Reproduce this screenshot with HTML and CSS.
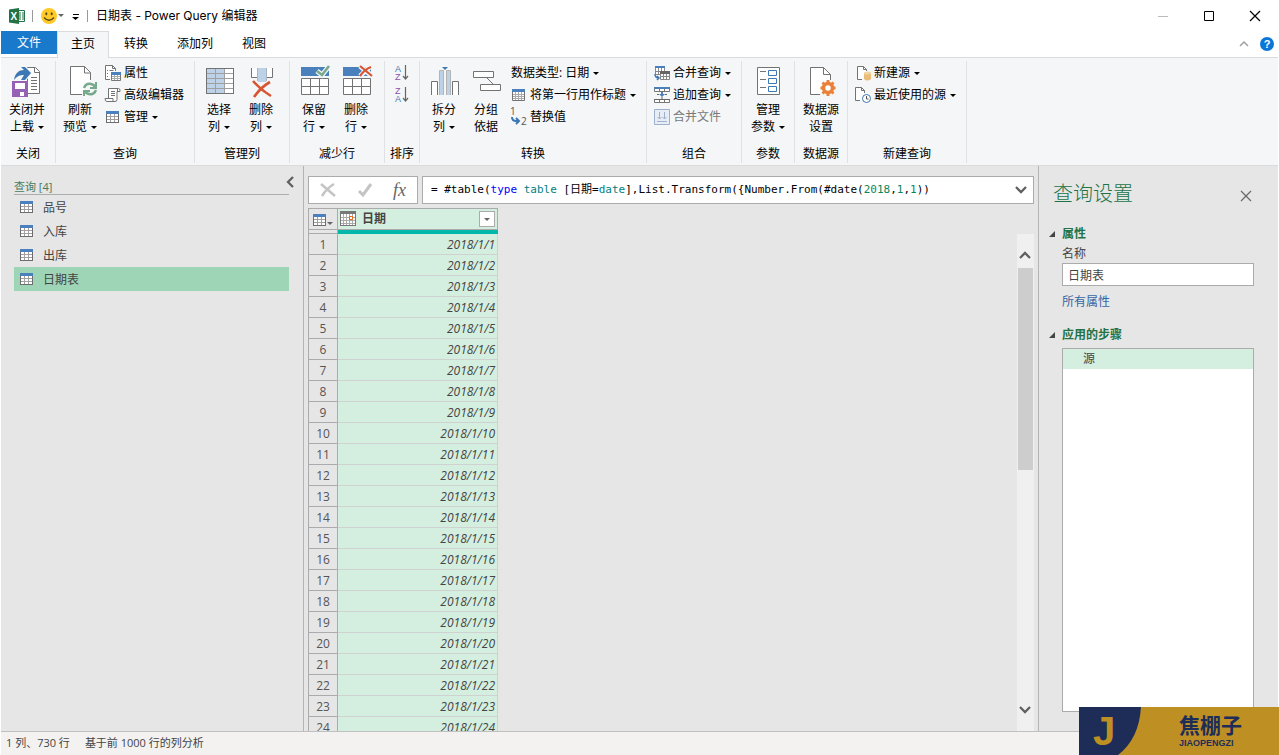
FILE: index.html
```html
<!DOCTYPE html>
<html lang="zh-CN">
<head>
<meta charset="utf-8">
<title>日期表 - Power Query 编辑器</title>
<link rel="stylesheet" href="styles.css">
</head>
<body>
<svg class="defs" aria-hidden="true">
  <symbol id="table" viewBox="0 0 14 14" shape-rendering="crispEdges">
    <path fill="#fff" d="M0 1h13v12H0z"/><path fill="#4a80bb" d="M0 1h13v3H0z"/>
    <path fill="none" stroke="#a0a0a0" d="M1 6.500h11M1 9.500h11M4.500 4v8M8.500 4v8"/>
    <path fill="none" stroke="#6d6d6d" d="M.5 4v8.500h12V4"/>
  </symbol>
  <symbol id="chevron" viewBox="0 0 14 14"><path fill="none" stroke="#606060" stroke-width="2.300" d="M2 10l5-5 5 5"/></symbol>
  <symbol id="close" viewBox="0 0 12 12"><path fill="none" stroke="currentColor" stroke-width="1.200" d="M1 1l10 10M11 1L1 11"/></symbol>
</svg>

<header class="titlebar">
  <svg class="excel" width="16" height="16" viewBox="0 0 16 16"><path fill="#fff" stroke="#217346" d="M8 2.500h7.500v11H8z"/><path stroke="#217346" d="M10 5h2M13 5h2M10 7h2M13 7h2M10 9h2M13 9h2M10 11h2M13 11h2"/><path fill="#217346" d="M0 1.500L10 0v16L0 14.500z"/><text x="1.500" y="12" class="xl">X</text></svg>
  <span class="bar"></span>
  <button class="quick" aria-label="发送笑脸"><svg width="16" height="16" viewBox="0 0 16 16"><circle cx="8" cy="8" r="8" fill="#ffc928"/><ellipse cx="5.300" cy="5.800" rx="1" ry="1.500" fill="#564617"/><ellipse cx="10.700" cy="5.800" rx="1" ry="1.500" fill="#564617"/><path fill="none" stroke="#564617" stroke-width="1.300" d="M3 9.500q5 5.500 10 0"/></svg><span class="caret soft"></span></button>
  <button class="quick more" aria-label="自定义快速访问工具栏"><svg width="8" height="8" viewBox="0 0 8 8"><path d="M1 1h6v1H1zM0 4h7L3.500 7z"/></svg></button>
  <span class="bar"></span>
  <h1 class="title">日期表 - Power Query 编辑器</h1>
  <div class="window-buttons">
    <button aria-label="最小化"><svg width="12" height="12" viewBox="0 0 12 12"><path stroke="#bbb" d="M1 6.500h10"/></svg></button>
    <button aria-label="最大化"><svg width="12" height="12" viewBox="0 0 12 12"><path fill="none" stroke="#000" d="M1.500 1.500h9v9h-9z"/></svg></button>
    <button aria-label="关闭"><svg width="12" height="12"><use href="#close"/></svg></button>
  </div>
</header>

<nav class="tabs">
  <button class="tab file">文件</button><button class="tab active">主页</button><button class="tab">转换</button><button class="tab">添加列</button><button class="tab">视图</button>
  <div class="tabs-end">
    <button aria-label="折叠功能区"><svg width="10" height="6" viewBox="0 0 10 6"><path fill="none" stroke="#a0a0a0" stroke-width="1.500" d="M1 5l4-4 4 4"/></svg></button>
    <button aria-label="帮助"><svg width="14" height="14" viewBox="0 0 14 14"><circle cx="7" cy="7" r="7" fill="#0a76d8"/><text x="7" y="11" class="help">?</text></svg></button>
  </div>
</nav>

<section class="ribbon">
  <div class="group">
    <div class="tools">
      <button class="big wide"><svg viewBox="0 0 32 32"><path fill="#fff" stroke="#737373" d="M16.500 2.500h8l4 4v22h-12z"/><path fill="none" stroke="#737373" d="M23.500 2.500v5h5M20 12.500h6M20 15.500h6M20 18.500h6M20 21.500h6M20 24.500h6"/><path fill="none" stroke="#f5f6f7" stroke-width="2" d="M3 15C4 8 8 5 13 5L10 2h4l6 6-6 7h-4l3-5c-4 0-7 1-10 5z"/><path fill="#3c78b4" d="M3 15C4 8 8 5 13 5L10 2h4l6 6-6 7h-4l3-5c-4 0-7 1-10 5z"/><path fill="#9660b4" d="M1 16h16v16H1z"/><path fill="#fff" d="M4 18h10v6H4zM5 27h8v4H5z"/><path fill="#9660b4" d="M5 27h4v4H5z"/></svg><span>关闭并<br>上载<i class="caret"></i></span></button>
    </div><p>关闭</p>
  </div>
  <div class="group">
    <div class="tools">
      <button class="big"><svg viewBox="0 0 32 32"><path fill="#fff" stroke="#737373" d="M18 29.500H6.500v-28h14l6 6V15"/><path fill="none" stroke="#737373" d="M20.500 1.500V8h6"/><g fill="none" stroke="#77a98c" stroke-width="2.500"><path d="M20 23q2-5 7-4 3 .5 4 3M32 25q-2 5-7 4-3-.5-4-3"/><path d="M32 17v6h-6M20 31v-5h6" stroke-width="2"/></g></svg><span>刷新<br>预览<i class="caret"></i></span></button>
      <div class="rows">
        <button><svg viewBox="0 0 16 16"><path fill="#fff" stroke="#737373" d="M5 14.500H.5V.5h7l3 3V6"/><path fill="none" stroke="#737373" d="M7.500.5v3h3M4.500 5.500h4M2 5.500h1M2 8.500h1M2 11.500h1"/><path fill="#fff" stroke="#777" d="M6.500 8.500h9v7h-9z"/><path stroke="#aaa" d="M7 11.500h8M7 13.500h8M9.500 10v5M12.500 10v5"/><path fill="#4a80bb" d="M6 7h10v3H6z"/></svg>属性</button>
        <button><svg viewBox="0 0 16 16"><path fill="#fff" stroke="#737373" d="M3.500 11V1.500h10q2 0 1.500 3h-3v8q0 2-2 2h-8q-2 0-2-3h8v3"/><path fill="none" stroke="#737373" d="M12.500 4V2M6 4.500h4M6 6.500h4M6 8.500h4"/></svg>高级编辑器</button>
        <button><svg viewBox="0 0 16 16"><use href="#table" x="1" y="1" width="14" height="14"/></svg>管理<i class="caret"></i></button>
      </div>
    </div><p>查询</p>
  </div>
  <div class="group">
    <div class="tools">
      <button class="big"><svg viewBox="0 0 32 32" shape-rendering="crispEdges"><path fill="#fff" d="M3 3h28v26H3z"/><path fill="#bdd1e7" d="M3 3h19v26H3z"/><path fill="none" stroke="#a0a0a0" d="M4 8.500h26M4 13.500h26M4 18.500h26M4 23.500h26M12.500 3v25M21.500 3v25"/><path fill="none" stroke="#737373" d="M3.500 3.500h27v25h-27z"/></svg><span>选择<br>列<i class="caret"></i></span></button>
      <button class="big"><svg viewBox="0 0 32 32"><path fill="#fff" d="M6 3h6v9H6zM22 3h6v9h-6z"/><path fill="none" stroke="#737373" d="M6.500 3v9.500H12M27.500 3v9.500H22"/><path fill="#bdd1e7" d="M13 3h8v14h-8z"/><path fill="none" stroke="#a8b4c2" d="M12.500 3v13M21.500 3v13"/><path fill="none" stroke="#f5f6f7" stroke-width="6" d="M9 17l17 15M25 17L9 32"/><path fill="none" stroke="#d65532" stroke-width="2.600" d="M8 16q8 9 18 15M25 17Q16 22 9 32"/></svg><span>删除<br>列<i class="caret"></i></span></button>
    </div><p>管理列</p>
  </div>
  <div class="group">
    <div class="tools">
      <button class="big"><svg viewBox="0 0 32 32"><path fill="#4a80bb" d="M3 2h28v9H3z"/><path fill="#fff" stroke="#737373" d="M3.500 13.500h27v16h-27zM4 21.500h26M12.500 14v15M21.500 14v15"/><path fill="none" stroke="#f5f6f7" stroke-width="5" d="M19 6l5 4 8-10"/><path fill="none" stroke="#77a98c" stroke-width="2.500" d="M19 6l5 4 7-9"/></svg><span>保留<br>行<i class="caret"></i></span></button>
      <button class="big"><svg viewBox="0 0 32 32"><path fill="#4a80bb" d="M3 2h28v9H3z"/><path fill="#fff" stroke="#737373" d="M3.500 13.500h27v16h-27zM4 21.500h26M12.500 14v15M21.500 14v15"/><path fill="none" stroke="#f5f6f7" stroke-width="5" d="M20 1l12 10M31 1L20 11"/><path fill="none" stroke="#d65532" stroke-width="2.200" d="M20 1l12 10M31 2Q25 4 20 11"/></svg><span>删除<br>行<i class="caret"></i></span></button>
    </div><p>减少行</p>
  </div>
  <div class="group">
    <div class="tools">
      <div class="rows sort">
        <button aria-label="升序排序"><svg viewBox="0 0 16 16"><text x="1" y="7" fill="#3c78b4">A</text><text x="1" y="15" fill="#8a4fae">Z</text><path fill="none" stroke="#666" stroke-width="1.200" d="M11.500 0v14M9 11l2.500 3 2.500-3"/></svg></button>
        <button aria-label="降序排序"><svg viewBox="0 0 16 16"><text x="1" y="7" fill="#8a4fae">Z</text><text x="1" y="15" fill="#3c78b4">A</text><path fill="none" stroke="#666" stroke-width="1.200" d="M11.500 0v14M9 11l2.500 3 2.500-3"/></svg></button>
      </div>
    </div><p>排序</p>
  </div>
  <div class="group">
    <div class="tools">
      <button class="big"><svg viewBox="0 0 32 32"><path fill="#fff" stroke="#737373" d="M3.500 30V16.500H9.500V30M24.500 30V16.500h6V30"/><path fill="#bdd1e7" d="M11 6h4v24h-4zM19 6h4v24h-4z"/><path fill="none" stroke="#b4b4b4" d="M11.500 30V5.500h4V30M18.500 30V5.500h4V30"/><path fill="#3c78b4" d="M14 2h6l-3 3z"/></svg><span>拆分<br>列<i class="caret"></i></span></button>
      <button class="big"><svg viewBox="0 0 32 32"><path fill="#fff" stroke="#737373" d="M3.500 6.500h20v6h-20zM10.500 19.500h20v6h-20zM17 13l6 6"/></svg><span>分组<br>依据</span></button>
      <div class="rows">
        <button>数据类型: 日期<i class="caret"></i></button>
        <button><svg viewBox="0 0 16 16"><path fill="#fff" stroke="#737373" d="M1.500 2.500h12v11h-12z"/><path fill="#4a80bb" d="M1 2h13v3H1z"/><path stroke="#aaa" d="M2 7.500h11M2 9.500h11M2 11.500h11M4.500 5v8M7.500 5v8M10.500 5v8"/></svg>将第一行用作标题<i class="caret"></i></button>
        <button class="replace"><svg viewBox="0 0 16 16"><text x="-1" y="6">1</text><text x="10" y="16">2</text><path fill="none" stroke="#3c78b4" stroke-width="2" d="M1 8q0 4 4 4h2M5 9l3 3-3 3"/></svg>替换值</button>
      </div>
    </div><p>转换</p>
  </div>
  <div class="group">
    <div class="tools">
      <div class="rows">
        <button><svg viewBox="0 0 16 16"><path fill="#fff" stroke="#888" d="M1.500 3v6.500h9V3M2 6.500h8M4.500 3v6M7.500 3v6"/><path fill="#4a80bb" d="M1 1h10v2H1z"/><path fill="#fff" stroke="#888" d="M6.500 8v6.500h9V8M7 11.500h8M9.500 8v6M12.500 8v6"/><path fill="#666" d="M6 6h10v3H6z"/><path fill="none" stroke="#3c78b4" stroke-width="1.500" d="M1 9q0 4 4 4M3 11l2 2-2 2"/></svg>合并查询<i class="caret"></i></button>
        <button><svg viewBox="0 0 16 16"><path fill="#fff" stroke="#777" d="M.5 1.500h15v3H.5zM5.500 2v2M10.500 2v2M.5 12.500h15v3H.5zM5.500 13v2M10.500 13v2"/><path fill="#4a80bb" d="M0 0h16v2H0zM7 5h2v2h2L8 10 5 7h2z"/><path stroke="#666" d="M0 12.500h16M8 10v2M3 7.500h2M11 7.500h2"/></svg>追加查询<i class="caret"></i></button>
        <button disabled><svg viewBox="0 0 16 16"><path fill="#e7edf5" stroke="#9eb0cc" d="M.5.500h15v15H.5z"/><path fill="none" stroke="#9eb0cc" d="M3 12.500h10M5.500 3v7M3.500 8l2 2 2-2M10.500 3v7M8.500 8l2 2 2-2"/></svg>合并文件</button>
      </div>
    </div><p>组合</p>
  </div>
  <div class="group">
    <div class="tools">
      <button class="big param"><svg viewBox="0 0 32 32"><path fill="#fff" stroke="#737373" d="M5.500 2.500h22v27h-22z"/><path stroke="#737373" d="M8 6.500h6M8 14.500h6M8 22.500h6"/><path fill="#fff" stroke="#3c78b4" d="M16.500 5.500h8v5h-8zM16.500 13.500h8v5h-8zM16.500 21.500h8v5h-8z"/></svg><span>管理<br>参数<i class="caret"></i></span></button>
    </div><p>参数</p>
  </div>
  <div class="group">
    <div class="tools">
      <button class="big param"><svg viewBox="0 0 32 32"><path fill="#fff" stroke="#737373" d="M15 29.500H5.500v-27h13l7 7V15"/><path fill="none" stroke="#737373" d="M18.500 2.500v7h7"/><circle cx="23" cy="23" r="4.500" fill="#fff" stroke="#e8823a" stroke-width="3.500"/><path stroke="#e8823a" stroke-width="3" d="M23 15v3M23 28v3M15.500 23h3M27.500 23h3M17.500 17.500l2 2M26.500 26.500l2 2M28.500 17.500l-2 2M19.500 26.500l-2 2"/></svg><span>数据源<br>设置</span></button>
    </div><p>数据源</p>
  </div>
  <div class="group">
    <div class="tools">
      <div class="rows">
        <button><svg viewBox="0 0 16 16"><path fill="#fff" stroke="#737373" d="M7 14.500H2.500V1.500h6l3 3V6"/><path fill="none" stroke="#737373" d="M8.500 1.500v3h3"/><path fill="#e9bd78" d="M9 8v6q3.500 3 7 0V8z"/><ellipse cx="12.500" cy="8" rx="3.500" ry="1.500" fill="#f3d5a4"/></svg>新建源<i class="caret"></i></button>
        <button><svg viewBox="0 0 16 16"><path fill="#fff" stroke="#737373" d="M5 13.500H.5V.5h6l3 3V6"/><path fill="none" stroke="#737373" d="M6.500.5v3h3"/><circle cx="11.500" cy="11.500" r="4" fill="#fff" stroke="#3c78b4"/><path fill="none" stroke="#555" d="M11.500 9v3h2"/></svg>最近使用的源<i class="caret"></i></button>
      </div>
    </div><p>新建查询</p>
  </div>
</section>

<main class="workspace">
  <aside class="queries">
    <div class="queries-head"><h2>查询 [4]</h2><button aria-label="折叠"><svg width="14" height="14"><use href="#chevron"/></svg></button></div>
    <ul>
      <li><svg><use href="#table"/></svg>品号</li>
      <li><svg><use href="#table"/></svg>入库</li>
      <li><svg><use href="#table"/></svg>出库</li>
      <li class="selected"><svg><use href="#table"/></svg>日期表</li>
    </ul>
  </aside>

  <section class="preview">
    <div class="formula-row">
      <div class="formula-tools">
        <button aria-label="取消"><svg width="16" height="14" viewBox="0 0 16 14"><path fill="none" stroke="#c4c4c4" stroke-width="2.500" d="M1 1q7 6 14 12M14 1Q7 5 2 13"/></svg></button>
        <button aria-label="确认"><svg width="16" height="14" viewBox="0 0 16 14"><path fill="none" stroke="#c4c4c4" stroke-width="3" d="M2 8l4 4 8-11"/></svg></button>
        <button class="fx">fx</button>
      </div>
      <div class="formula"><code contenteditable="true" role="textbox" aria-label="公式" spellcheck="false">= #table(<b class="kw">type</b> <b class="ty">table</b> [日期=<b class="ty">date</b>],List.Transform({Number.From(#date(<b class="nu">2018</b>,<b class="nu">1</b>,<b class="nu">1</b>))</code><button aria-label="展开"><svg class="down" width="14" height="14"><use href="#chevron"/></svg></button></div>
    </div>
    <div class="grid">
      <table>
        <thead>
          <tr><th class="corner"><svg><use href="#table"/></svg><i class="caret"></i></th><th class="column"><div><svg width="16" height="16" viewBox="0 0 16 16" shape-rendering="crispEdges"><path fill="#fff" stroke="#777" d="M.5.500h15v14H.5z"/><path fill="#777" d="M0 0h16v3H0z"/><path stroke="#aaa" d="M1 6.500h14M1 9.500h14M1 12.500h14M3.500 3v11M6.500 3v11M9.500 3v11M12.500 3v11"/><path fill="#fff" stroke="#e07020" d="M9.500 5.500h3v3h-3z"/></svg>日期<button aria-label="筛选"><i class="caret soft"></i></button></div></th></tr>
          <tr class="quality"><td></td><td></td></tr>
        </thead>
        <tbody>
          <tr><th>1</th><td>2018/1/1</td></tr>
          <tr><th>2</th><td>2018/1/2</td></tr>
          <tr><th>3</th><td>2018/1/3</td></tr>
          <tr><th>4</th><td>2018/1/4</td></tr>
          <tr><th>5</th><td>2018/1/5</td></tr>
          <tr><th>6</th><td>2018/1/6</td></tr>
          <tr><th>7</th><td>2018/1/7</td></tr>
          <tr><th>8</th><td>2018/1/8</td></tr>
          <tr><th>9</th><td>2018/1/9</td></tr>
          <tr><th>10</th><td>2018/1/10</td></tr>
          <tr><th>11</th><td>2018/1/11</td></tr>
          <tr><th>12</th><td>2018/1/12</td></tr>
          <tr><th>13</th><td>2018/1/13</td></tr>
          <tr><th>14</th><td>2018/1/14</td></tr>
          <tr><th>15</th><td>2018/1/15</td></tr>
          <tr><th>16</th><td>2018/1/16</td></tr>
          <tr><th>17</th><td>2018/1/17</td></tr>
          <tr><th>18</th><td>2018/1/18</td></tr>
          <tr><th>19</th><td>2018/1/19</td></tr>
          <tr><th>20</th><td>2018/1/20</td></tr>
          <tr><th>21</th><td>2018/1/21</td></tr>
          <tr><th>22</th><td>2018/1/22</td></tr>
          <tr><th>23</th><td>2018/1/23</td></tr>
          <tr><th>24</th><td>2018/1/24</td></tr>
        </tbody>
      </table>
      <div class="scrollbar">
        <button aria-label="向上滚动"><svg width="14" height="14"><use href="#chevron"/></svg></button>
        <div class="track"><div class="thumb"></div></div>
        <button aria-label="向下滚动"><svg class="down" width="14" height="14"><use href="#chevron"/></svg></button>
      </div>
    </div>
  </section>

  <aside class="settings">
    <div class="settings-head"><h2>查询设置</h2><button aria-label="关闭查询设置"><svg width="12" height="12"><use href="#close"/></svg></button></div>
    <h3><svg viewBox="0 0 6 6"><path d="M6 0v6H0z"/></svg>属性</h3>
    <label for="name">名称</label>
    <input id="name" value="日期表">
    <a href="#">所有属性</a>
    <h3><svg viewBox="0 0 6 6"><path d="M6 0v6H0z"/></svg>应用的步骤</h3>
    <ol><li>源</li></ol>
  </aside>
</main>

<footer class="status"><span>1 列、730 行</span><span>基于前 1000 行的列分析</span></footer>

<div class="brand">
  <svg width="62" height="48" viewBox="0 0 62 48"><path fill="#1e2d57" d="M0 0h62q-2 32-23 48H0z"/><text x="14" y="38">J</text></svg>
  <div><strong>焦棚子</strong><small>JIAOPENGZI</small></div>
</div>
</body>
</html>
```
FILE: styles.css
```css
* { box-sizing: border-box; }
body {
  margin: 0;
  padding: 0 1px;
  height: 100vh;
  display: flex;
  flex-direction: column;
  overflow: hidden;
  background: #fff;
  color: #000;
  font: 12px/16px "Open Sans", "Noto Sans CJK SC", sans-serif;
}
h1, h2, h3, p, ul, ol { margin: 0; padding: 0; font-size: 12px; font-weight: normal; list-style: none; }
button { font: inherit; color: inherit; border: 0; padding: 0; background: none; }
svg { display: block; flex: none; overflow: visible; }
.defs { position: absolute; width: 0; height: 0; }
.caret { display: inline-block; border: 3px solid transparent; border-top-color: #000; border-bottom: 0; margin-left: 4px; vertical-align: 2px; }
.caret.soft { border-top-color: #666; }
.down { transform: rotate(180deg); }

/* Title bar */
.titlebar { display: flex; align-items: center; height: 31px; flex: none; padding-left: 8px; }
.xl { font: bold 10px "Liberation Sans", sans-serif; fill: #fff; }
.bar { width: 1px; height: 12px; background: #999; margin: 0 8px 0 7px; }
.quick { display: flex; align-items: center; }
.quick .caret { margin-left: 1px; }
.quick.more { margin: 2px 0 0 8px; }
.title { flex: 1; font-family: Inter, "Noto Sans CJK SC", sans-serif; }
.window-buttons { display: flex; }
.window-buttons button { width: 46px; height: 30px; display: grid; place-items: center; }

/* Tabs */
.tabs { display: flex; height: 26px; flex: none; }
.tab { height: 25px; padding: 0 14px; margin-left: 1px; }
.tab.file { height: 23px; padding: 0 16px; margin: 0; background: #1979ca; color: #fff; }
.tab.active { height: 27px; margin: 0; padding: 0 13px 2px; background: #f5f6f7; border: 1px solid #dadbdc; border-bottom: 0; position: relative; }
.tabs-end { margin-left: auto; display: flex; align-items: center; gap: 11px; padding-right: 4px; }
.help { font: bold 11px "Liberation Sans", sans-serif; fill: #fff; text-anchor: middle; }

/* Ribbon */
.ribbon { display: flex; flex: none; height: 109px; padding: 3px 0 2px; background: #f5f6f7; border: solid #dadbdc; border-width: 1px 0; }
.group { display: flex; flex-direction: column; border-right: 1px solid #e0e1e2; padding: 1px 3px 0; white-space: nowrap; }
.group p { text-align: center; margin-top: auto; padding-bottom: 1px; }
.tools { display: flex; }
.big { width: 42px; padding-top: 3px; display: flex; flex-direction: column; align-items: center; gap: 4px; line-height: 17px; }
.big.wide { width: 46px; margin-right: 2px; }
.big.param { width: 46px; }
.big:last-child:nth-child(2) { margin-right: 4px; }
.big svg { width: 32px; height: 32px; }
.rows { display: flex; flex-direction: column; padding: 0 7px 0 4px; }
.rows button { display: flex; align-items: center; gap: 3px; height: 22px; }
.rows .caret { margin-left: 1px; }
.rows svg { width: 16px; height: 16px; }
.rows button:disabled { color: #777; }
.sort { padding: 0 6px; }
.sort text { font: 9px "Liberation Sans", sans-serif; }
.replace text { font: 10px "Open Sans", sans-serif; fill: #555; }

/* Workspace */
.workspace { display: flex; flex: 1; min-height: 0; background: #e6e6e6; color: #444; }
.queries { flex: 0 0 303px; padding: 0 14px 0 13px; border-right: 1px solid #b4b4b4; }
.queries-head { display: flex; justify-content: space-between; height: 29px; border-bottom: 1px solid #a9adab; color: #457c60; }
.queries-head h2 { padding-top: 13px; font-size: 11px; }
.queries-head button { margin: 4px -8px 0 0; transform: rotate(-90deg); }
.queries li { display: flex; align-items: center; gap: 9px; height: 24px; padding: 2px 0 0 6px; }
.queries li svg { width: 14px; height: 14px; margin-bottom: 2px; }
.queries .selected { background: #9fd5b7; }

.preview { flex: 1; min-width: 0; display: flex; flex-direction: column; gap: 4px; padding: 10px 4px 0; }
.formula-row { display: flex; gap: 4px; height: 28px; flex: none; }
.formula-tools, .formula { display: flex; align-items: center; background: #fff; border: 1px solid #ababab; }
.formula-tools { width: 110px; justify-content: space-between; padding: 0 11px; }
.fx { font: italic 18px/20px "Liberation Serif", serif; color: #666; }
.formula { flex: 1; justify-content: space-between; padding: 0 5px 0 8px; color: #000; }
.formula code { font: 11px/16px "DejaVu Sans Mono", "Noto Sans CJK SC", monospace; outline: 0; white-space: pre; }
.formula b { font-weight: normal; }
.kw { color: #00f; }
.ty { color: #008080; }
.nu { color: #098658; }

.grid { flex: 1; min-height: 0; display: flex; justify-content: space-between; align-items: flex-start; overflow: hidden; }
.grid table { width: 190px; table-layout: fixed; border-collapse: separate; border-spacing: 0; }
.grid th, .grid td { padding: 0; height: 21px; line-height: 16px; font-weight: normal; }
.grid thead th { height: 22px; border: 1px solid #ababab; border-left: 0; }
.grid .corner { width: 30px; border-left: 1px solid #ababab; }
.corner svg { width: 14px; height: 14px; display: inline-block; vertical-align: middle; }
.corner .caret { margin-left: 0; border-top-color: #666; vertical-align: -2px; }
.grid .column { background: #d4efe0; font-weight: bold; }
.column div { display: flex; align-items: center; gap: 6px; padding: 0 2px; }
.column button { margin-left: auto; width: 16px; height: 16px; display: grid; place-items: center; background: #fff; border: 1px solid #ababab; }
.column button .caret { margin: 0; }
.grid .quality td { height: 4px; background: #01b8aa; border: 0; }
.grid .quality td:first-child { background: #e6e6e6; border: solid #ababab; border-width: 0 1px 1px; }
.grid tbody th { padding-top: 2px; border: solid #ababab; border-width: 0 1px 1px; color: #555; }
.grid tbody td { padding: 2px 2px 0 0; text-align: right; font-style: italic; background: #d4efe0; border: solid #cfd2d0; border-width: 0 1px 1px 0; }
.scrollbar { width: 17px; align-self: stretch; margin-top: 26px; display: flex; flex-direction: column; background: #f0f0f0; }
.scrollbar button { display: grid; place-items: center; height: 42px; padding-right: 1px; }
.scrollbar button:first-child { height: 34px; padding-top: 8px; }
.track { flex: 1; padding: 0 1px; }
.thumb { height: 48%; background: #cdcdcd; }

.settings { flex: 0 0 240px; display: flex; flex-direction: column; padding: 12px 24px 19px 23px; border-left: 1px solid #b4b4b4; }
.settings-head { display: flex; justify-content: space-between; align-items: center; margin-left: -9px; height: 32px; color: #217346; }
.settings-head h2 { font-size: 20px; line-height: 30px; font-weight: 300; }
.settings-head button { color: #666; padding: 4px 2px 0 0; }
.settings h3 { display: flex; align-items: center; gap: 7px; margin: 16px 0 0 -13px; line-height: 16px; font-weight: bold; color: #217346; }
.settings h3 svg { width: 6px; height: 6px; fill: #444; }
.settings label { margin: 4px 0 1px; }
.settings input { width: 100%; height: 23px; padding: 0 5px; border: 1px solid #ababab; background: #fff; font: inherit; color: #444; }
.settings a { margin-top: 8px; color: #3465a4; text-decoration: none; }
.settings a + h3 { margin-top: 17px; }
.settings ol { flex: 1; margin-top: 5px; border: 1px solid #ababab; background: #fff; }
.settings li { height: 20px; line-height: 20px; padding-left: 20px; background: #d4efe0; }

.status { display: flex; align-items: center; gap: 15px; flex: none; height: 24px; padding: 0 0 2px 5px; background: #f3f2f1; border-top: 1px solid #c0c0c0; color: #444; font-size: 11px; }

/* Brand badge over the bottom right corner */
.brand { position: absolute; right: 0; bottom: 0; display: flex; gap: 38px; width: 200px; height: 48px; background: #be9024; color: #1e2d57; }
.brand text { font: bold 40px "Liberation Sans", sans-serif; fill: #be9024; }
.brand div { display: flex; flex-direction: column; gap: 2px; padding-top: 6px; }
.brand strong { font-size: 21px; line-height: 24px; }
.brand small { font: bold 9px/9px "Liberation Sans", sans-serif; }
```
